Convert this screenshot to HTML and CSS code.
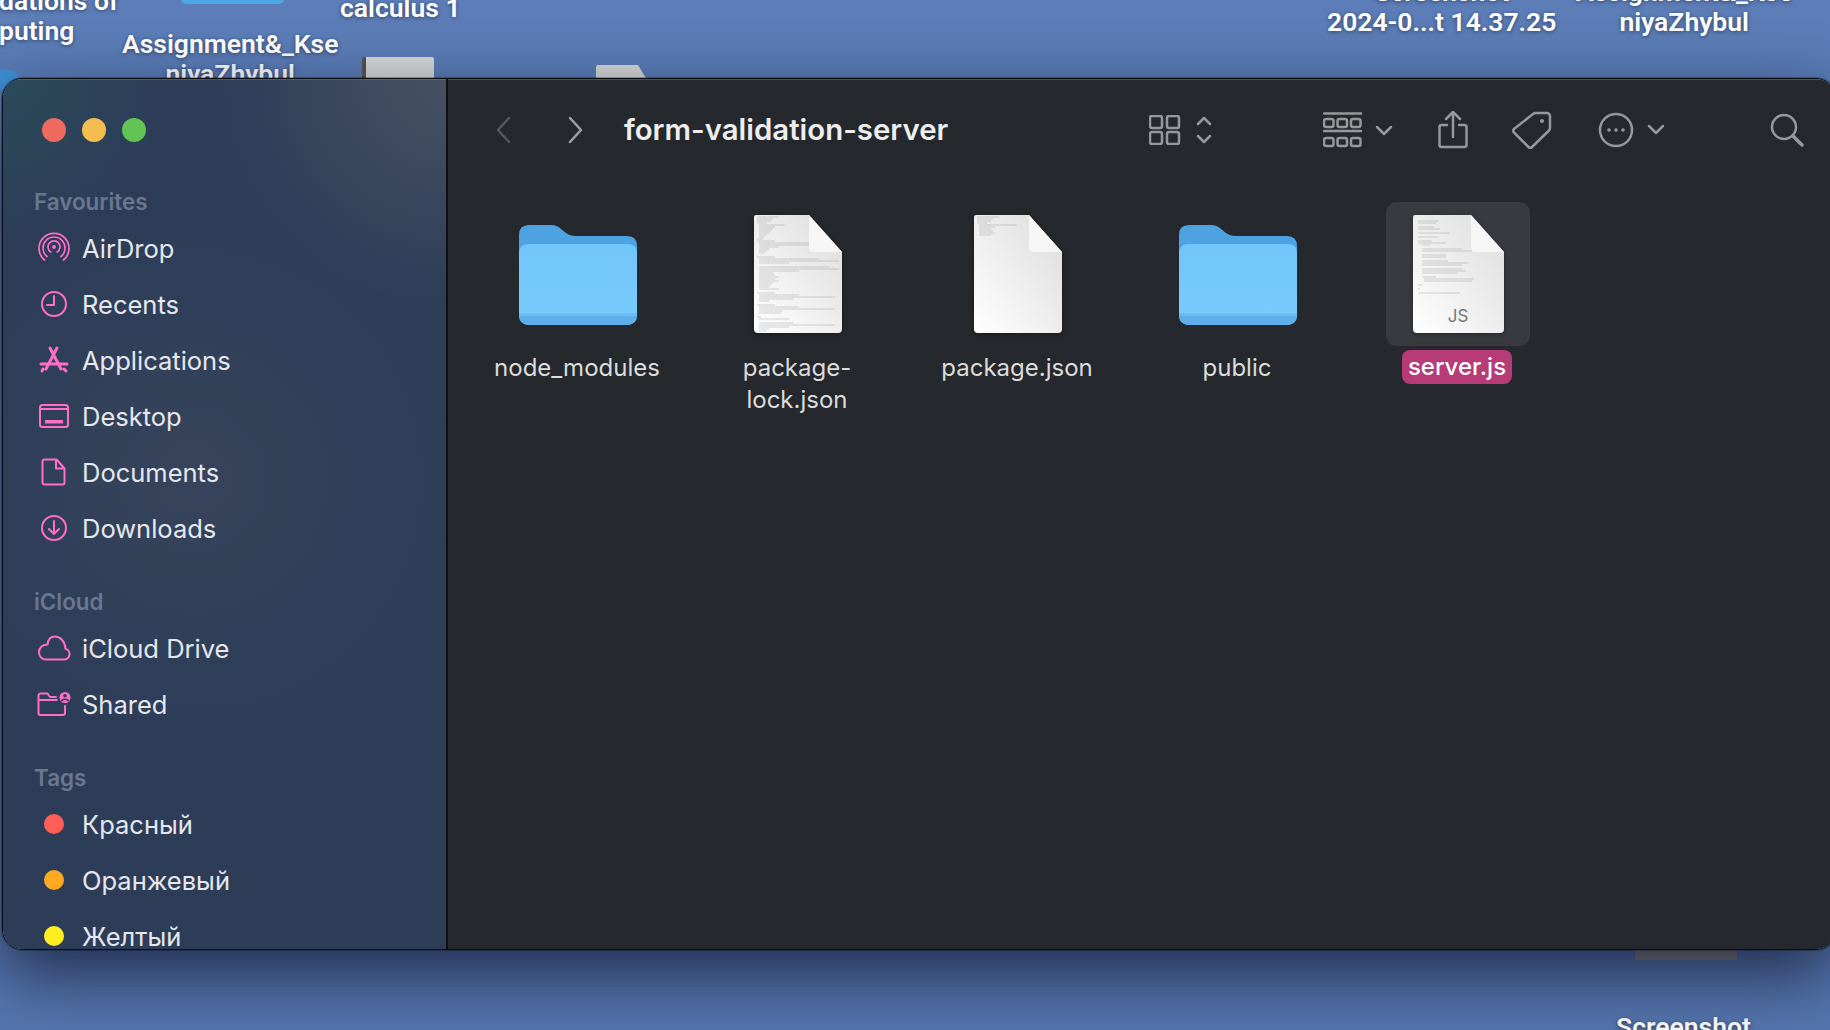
FILE: index.html
```html
<!DOCTYPE html>
<html lang="en">
<head>
    <meta charset="UTF-8">
    <meta name="viewport" content="width=device-width, initial-scale=1.0">
    <title>form-validation-server</title>
    <link rel="stylesheet" href="styles.css">
</head>
<body>
    <svg class="sprites" width="0" height="0">
        <defs>
            <linearGradient id="pageFill" x1="1" y1="0" x2="0" y2="1">
                <stop offset="0" stop-color="#dcdcdc"/>
                <stop offset="1" stop-color="#ffffff"/>
            </linearGradient>
            <linearGradient id="folderFront" x1="0" y1="0" x2="0" y2="1">
                <stop offset="0" stop-color="#72c5f9"/>
                <stop offset="1" stop-color="#79ccfd"/>
            </linearGradient>
            <symbol id="folder" viewBox="0 0 118 100">
                <path d="M0 10Q0 0 10 0H32Q38 0 42 4L47 8Q51 11 57 11H108Q118 11 118 21V88Q118 100 106 100H12Q0 100 0 88Z" fill="#4da2e2"/>
                <path d="M0 28Q0 19 10 19H108Q118 19 118 28V88Q118 100 106 100H12Q0 100 0 88Z" fill="url(#folderFront)"/>
                <path d="M0 88V91H118V88Z" fill="#6abcf2"/>
                <path d="M0 91Q0 100 12 100H106Q118 100 118 91Z" fill="#5eaeea"/>
            </symbol>
        </defs>
    </svg>

    <div class="desktop">
        <span class="desk-label label-foundations">dations of<br>puting</span>
        <div class="desk-folder"></div>
        <span class="desk-label label-calculus">calculus 1</span>
        <span class="desk-label label-assignment">Assignment&amp;_Kse<br>niyaZhybul</span>
        <div class="desk-doc doc-one"></div>
        <div class="desk-doc doc-two"></div>
        <div class="desk-blue"></div>
        <span class="desk-label label-shot">Screenshot<br>2024-0...t 14.37.25</span>
        <span class="desk-label label-assignment-two">Assignment&amp;_Kse<br>niyaZhybul</span>
        <div class="desk-thumb"></div>
        <span class="desk-label label-shot-two">Screenshot</span>

        <div class="window">
            <aside class="sidebar">
                <div class="traffic">
                    <span class="light light-red"></span>
                    <span class="light light-yellow"></span>
                    <span class="light light-green"></span>
                </div>

                <h3 class="side-head">Favourites</h3>
                <div class="side-row">
                    <svg class="side-icon thin" viewBox="0 0 32 32"><circle cx="16" cy="15" r="2" fill="#ff6ec7" stroke="none"/><path d="M12.800 20a6 6 0 1 1 6.400 0M9 24.500a11 11 0 1 1 14 0M6.500 28a15 15 0 1 1 19 0"/></svg>
                    <span>AirDrop</span>
                </div>
                <div class="side-row">
                    <svg class="side-icon" viewBox="0 0 32 32"><circle cx="16" cy="16" r="12"/><path d="M16 8v9H9"/></svg>
                    <span>Recents</span>
                </div>
                <div class="side-row">
                    <svg class="side-icon" viewBox="0 0 32 32"><path class="thick" d="M12 4l11 21M19 4L8 25M3 20h26M5 25l-1 2M26 25l2 2"/></svg>
                    <span>Applications</span>
                </div>
                <div class="side-row">
                    <svg class="side-icon" viewBox="0 0 32 32"><rect x="2" y="5" width="28" height="22" rx="2.500"/><path d="M2 9h28"/><rect x="7" y="20" width="18" height="3.500" fill="#ff6ec7" stroke="none"/></svg>
                    <span>Desktop</span>
                </div>
                <div class="side-row">
                    <svg class="side-icon" viewBox="0 0 32 32"><path d="M6.500 3.500h12l8 9v14a2 2 0 0 1-2 2h-18a2 2 0 0 1-2-2v-21a2 2 0 0 1 2-2zM18 3.500v9h8.500"/></svg>
                    <span>Documents</span>
                </div>
                <div class="side-row">
                    <svg class="side-icon" viewBox="0 0 32 32"><circle cx="16" cy="16" r="12"/><path d="M16 9v13M11 17l5 5 5-5"/></svg>
                    <span>Downloads</span>
                </div>

                <h3 class="side-head head-gap">iCloud</h3>
                <div class="side-row">
                    <svg class="side-icon wide" viewBox="0 0 34 26"><path d="M8 24.500H27a5.500 5.500 0 0 0 1.500-10.800C28 6 23 1.500 18 1.500 13.500 1.500 11 4.500 10.500 9.500 6 9.500 2 12.500 2 17c0 4.500 3 7.500 6 7.500z"/></svg>
                    <span>iCloud Drive</span>
                </div>
                <div class="side-row">
                    <svg class="side-icon wide" viewBox="0 0 34 26"><path d="M19 6H13L10.500 2.500H3.500a2 2 0 0 0-2 2V22a2 2 0 0 0 2 2H26a2 2 0 0 0 2-2V15M1.500 9H20"/><circle cx="28" cy="6.500" r="5.500" fill="#ff6ec7" stroke="none"/><circle cx="28" cy="4.800" r="1.800" fill="#2d3d58" stroke="none"/><path d="M24.800 9.500q3.200-2.400 6.400 0" stroke="#2d3d58" stroke-width="1.600"/></svg>
                    <span>Shared</span>
                </div>

                <h3 class="side-head head-gap">Tags</h3>
                <div class="side-row"><i class="tag tag-red"></i><span>Красный</span></div>
                <div class="side-row"><i class="tag tag-orange"></i><span>Оранжевый</span></div>
                <div class="side-row"><i class="tag tag-yellow"></i><span>Желтый</span></div>
            </aside>

            <main class="content">
                <header class="toolbar">
                    <svg class="nav-back" viewBox="0 0 16 28"><path d="M14 2L3 14l11 12"/></svg>
                    <svg class="nav-forward" viewBox="0 0 16 28"><path d="M2 2l11 12L2 26"/></svg>
                    <h1 class="title">form-validation-server</h1>
                    <svg class="tool tool-view" viewBox="0 0 64 30"><rect x="1" y="1" width="12" height="12" rx="2"/><rect x="18" y="1" width="12" height="12" rx="2"/><rect x="1" y="17" width="12" height="12" rx="2"/><rect x="18" y="17" width="12" height="12" rx="2"/><path d="M49 9l6-6 6 6M49 21l6 6 6-6"/></svg>
                    <svg class="tool tool-group" viewBox="0 0 70 36"><path d="M1 1.500h37M1 19h37"/><rect x="1" y="7" width="9.500" height="8" rx="2"/><rect x="14.500" y="7" width="9.500" height="8" rx="2"/><rect x="28" y="7" width="9.500" height="8" rx="2"/><rect x="1" y="26" width="9.500" height="8" rx="2"/><rect x="14.500" y="26" width="9.500" height="8" rx="2"/><rect x="28" y="26" width="9.500" height="8" rx="2"/><path d="M54 15l7 7 7-7"/></svg>
                    <svg class="tool tool-share" viewBox="0 0 30 38"><path d="M9 14H3.500a2 2 0 0 0-2 2v18a2 2 0 0 0 2 2h23a2 2 0 0 0 2-2V16a2 2 0 0 0-2-2H21M15 26V2M8 8l7-7 7 7"/></svg>
                    <svg class="tool tool-tag" viewBox="0 0 40 38"><path d="M24 2h11a3 3 0 0 1 3 3v12a4 4 0 0 1-1 2.500L20 36a2.500 2.500 0 0 1-3.500 0L2 21.500a2.500 2.500 0 0 1 0-3.500L21 3a4 4 0 0 1 3-1z"/><circle cx="30" cy="10" r="2" fill="#98989b" stroke="none"/></svg>
                    <svg class="tool tool-more" viewBox="0 0 66 36"><circle cx="18" cy="18" r="16"/><circle cx="11" cy="18" r="1.800" fill="#98989b" stroke="none"/><circle cx="18" cy="18" r="1.800" fill="#98989b" stroke="none"/><circle cx="25" cy="18" r="1.800" fill="#98989b" stroke="none"/><path d="M51 14l7 7 7-7"/></svg>
                    <svg class="tool tool-search" viewBox="0 0 34 34"><circle cx="14" cy="14" r="12"/><path d="M23 23l9 9" stroke-width="3.500"/></svg>
                </header>

                <section class="files">
                    <div class="file">
                        <div class="file-icon"><svg class="folder-svg"><use href="#folder"/></svg></div>
                        <p class="file-name">node_modules</p>
                    </div>
                    <div class="file">
                        <div class="file-icon">
                            <svg class="page-svg" viewBox="0 0 88 118">
                                <path d="M2 0H55L88 37V114Q88 118 84 118H4Q0 118 0 114V2Q0 0 2 0Z" fill="url(#pageFill)"/>
                                <path class="ink" d="M3 2h22M3 4h16M3 6h14M3 8h10M5 10h26M5 12h16M5 14h14M5 16h12M5 18h10M5 20h8M5 22h6M3 24h6M3 26h18M5 28h50M5 30h56M5 32h20M5 34h10M5 36h8M5 38h6M3 42h18M5 44h60M5 46h80M5 48h30M5 52h70M5 54h80M5 56h40M5 58h14M5 60h16M5 62h20M5 64h16M5 66h20M5 68h14M5 70h12M5 72h10M5 74h20M3 78h18M5 80h40M5 82h76M5 84h34M5 86h10M3 90h18M5 92h40M5 94h76M5 96h24M5 98h22M3 102h4M5 104h30M5 108h34M5 110h76M5 112h30M5 114h10M5 116h8"/>
                                <path d="M55 0L88 37H60Q55 37 55 32Z" fill="#f6f6f6"/>
                            </svg>
                        </div>
                        <p class="file-name">package-<br>lock.json</p>
                    </div>
                    <div class="file">
                        <div class="file-icon">
                            <svg class="page-svg" viewBox="0 0 88 118">
                                <path d="M2 0H55L88 37V114Q88 118 84 118H4Q0 118 0 114V2Q0 0 2 0Z" fill="url(#pageFill)"/>
                                <path class="ink" d="M3 2h22M3 4h16M3 6h14M3 8h10M5 10h38M5 12h16M5 14h12M5 16h14M5 18h16M5 20h12"/>
                                <path d="M55 0L88 37H60Q55 37 55 32Z" fill="#f6f6f6"/>
                            </svg>
                        </div>
                        <p class="file-name">package.json</p>
                    </div>
                    <div class="file">
                        <div class="file-icon"><svg class="folder-svg"><use href="#folder"/></svg></div>
                        <p class="file-name">public</p>
                    </div>
                    <div class="file selected">
                        <div class="file-icon">
                            <svg class="page-svg js-page" viewBox="0 0 91 118">
                                <path d="M2 0H58L91 37V114Q91 118 87 118H4Q0 118 0 114V2Q0 0 2 0Z" fill="url(#pageFill)"/>
                                <path class="ink" d="M5 6h20M5 8h18M5 12h16M5 14h22M5 18h32M5 22h20M5 26h14M5 28h28M9 30h8M9 34h40M9 36h50M9 40h24M9 42h24M9 46h26M9 48h46M9 50h40M9 54h40M9 56h44M9 58h36M9 62h14M11 64h50M11 66h48M5 70h4M5 74h2M5 78h42"/>
                                <path d="M58 0L91 37H62Q58 37 58 32Z" fill="#f6f6f6"/>
                            </svg>
                            <span class="js-mark">JS</span>
                        </div>
                        <p class="file-name">server.js</p>
                    </div>
                </section>
            </main>
        </div>
    </div>
</body>
</html>
```

FILE: styles.css
```css
* {
    box-sizing: border-box;
}
body {
    margin: 0;
    background: #5a7ab4;
    font-family: Inter, "Noto Sans", sans-serif;
    overflow: hidden;
}
.sprites {
    position: absolute;
}
.desktop {
    position: relative;
    width: 1830px;
    height: 1030px;
    overflow: hidden;
    background: linear-gradient(to bottom, #5c7db8, #5777b0);
}

/* things left on the desktop, behind the window */
.desk-label {
    position: absolute;
    color: #fff;
    font-family: Roboto, Inter, sans-serif;
    font-size: 26.5px;
    font-weight: 600;
    line-height: 30px;
    text-align: center;
    white-space: nowrap;
    text-shadow: 0 1px 4px rgba(0, 0, 0, .45);
}
.label-foundations {
    left: -1px;
    top: -14px;
    text-align: left;
}
.label-calculus {
    left: 340px;
    top: -7px;
}
.label-assignment {
    left: 122px;
    top: 29px;
}
.label-shot {
    left: 1327px;
    top: -23px;
}
.label-assignment-two {
    left: 1576px;
    top: -23px;
}
.label-shot-two {
    left: 1616px;
    top: 1012px;
}
.desk-folder {
    position: absolute;
    left: 181px;
    top: -10px;
    width: 103px;
    height: 14px;
    border-radius: 5px;
    background: #4da7e6;
}
.desk-doc {
    position: absolute;
    top: 57px;
    width: 72px;
    height: 30px;
    background: #d8d8d8;
    border-radius: 2px 2px 0 0;
}
.doc-one {
    left: 362px;
    border-left: 4px solid #555;
}
.doc-two {
    left: 596px;
    top: 65px;
    width: 60px;
    clip-path: polygon(0 0, 70% 0, 100% 100%, 0 100%);
}
.desk-blue {
    position: absolute;
    left: 0;
    top: 70px;
    width: 18px;
    height: 20px;
    border-radius: 0 8px 0 0;
    background: #3f92d6;
}
.desk-thumb {
    position: absolute;
    left: 1635px;
    top: 940px;
    width: 102px;
    height: 20px;
    background: #858585;
}

/* finder window */
.window {
    position: absolute;
    left: 2px;
    right: -6px;
    top: 78px;
    height: 872px;
    display: flex;
    overflow: hidden;
    border-radius: 20px;
    border: 1px solid #0c0d10;
    box-shadow: 0 25px 70px rgba(8, 14, 35, .72), 0 0 0 1px rgba(0, 0, 0, .25);
}
.sidebar {
    width: 445px;
    flex-shrink: 0;
    padding-left: 35px;
    border-right: 2px solid #0e0f12;
    background:
        radial-gradient(circle at 100% 0, rgba(120, 120, 120, .33), rgba(120, 120, 120, 0) 230px),
        radial-gradient(circle at 0 0, rgba(40, 90, 90, .45), rgba(40, 90, 90, 0) 160px),
        radial-gradient(circle at 190px 400px, rgba(90, 90, 100, .22), rgba(90, 90, 100, 0) 260px),
        #2d3d58;
    box-shadow: inset 0 1px 0 rgba(255, 255, 255, .14);
}
.traffic {
    display: flex;
    align-items: center;
    gap: 16px;
    height: 102px;
    padding: 0 0 0 4px;
}
.light {
    width: 24px;
    height: 24px;
    border-radius: 50%;
}
.light-red {
    background: #ee6a5f;
}
.light-yellow {
    background: #f5bd4f;
}
.light-green {
    background: #61c454;
}
.side-head {
    margin: 1px 0 0 -4px;
    height: 39px;
    line-height: 39px;
    font-size: 22.4px;
    font-weight: 600;
    color: #68788f;
}
.head-gap {
    margin-top: 26px;
}
.side-head + .side-row {
    margin-top: -1px;
}
.side-row {
    display: flex;
    align-items: center;
    gap: 12px;
    height: 56px;
    font-size: 25.5px;
    color: #e6e8ee;
}
.side-icon {
    width: 32px;
    height: 32px;
    flex-shrink: 0;
    fill: none;
    stroke: #ff6ec7;
    stroke-width: 2;
    stroke-linecap: round;
    stroke-linejoin: round;
}
.side-icon.thin {
    stroke-width: 1.700;
}
.side-icon .thick {
    stroke-width: 3;
}
.side-icon.wide {
    width: 34px;
    height: 26px;
    margin: 0 -1px 0 -1px;
}
.tag {
    width: 20px;
    height: 20px;
    margin: 0 6px;
    border-radius: 50%;
}
.tag-red {
    background: #ff5f57;
}
.tag-orange {
    background: #ffa922;
}
.tag-yellow {
    background: #ffee22;
}

/* right pane */
.content {
    flex: 1;
    min-width: 0;
    background: #25282c;
    box-shadow: inset 0 1px 0 rgba(255, 255, 255, .2);
}
.toolbar {
    display: flex;
    align-items: center;
    height: 101px;
    padding-left: 47px;
}
.toolbar svg {
    flex-shrink: 0;
    fill: none;
    stroke-linecap: round;
    stroke-linejoin: round;
}
.nav-back,
.nav-forward {
    width: 16px;
    height: 28px;
    stroke-width: 2.500;
}
.nav-back {
    stroke: #55575b;
}
.nav-forward {
    margin-left: 57px;
    stroke: #a0a0a3;
}
.title {
    margin: 0 0 0 40px;
    width: 525px;
    font-size: 29.4px;
    font-weight: 600;
    color: #eeeeee;
    white-space: nowrap;
}
.tool {
    stroke: #98989b;
    stroke-width: 2.500;
}
.tool-view {
    width: 64px;
    height: 30px;
}
.tool-group {
    margin-left: 110px;
    width: 70px;
    height: 36px;
}
.tool-share {
    margin-left: 45px;
    width: 30px;
    height: 38px;
}
.tool-tag {
    margin-left: 44px;
    width: 40px;
    height: 38px;
}
.tool-more {
    margin-left: 46px;
    width: 66px;
    height: 36px;
}
.tool-search {
    margin-left: 106px;
    width: 34px;
    height: 34px;
}
.files {
    display: flex;
    padding: 22px 0 0 20px;
}
.file {
    width: 220px;
    display: flex;
    flex-direction: column;
    align-items: center;
}
.file-icon {
    position: relative;
    display: flex;
    align-items: center;
    justify-content: center;
    width: 144px;
    height: 144px;
    border-radius: 10px;
}
.folder-svg {
    width: 118px;
    height: 100px;
    margin-top: 2px;
}
.page-svg {
    width: 88px;
    height: 118px;
    margin-top: -1px;
    filter: drop-shadow(0 1px 2px rgba(0, 0, 0, .4));
}
.page-svg .ink {
    fill: none;
    stroke: #888;
    stroke-width: .35;
}
.js-page {
    width: 91px;
}
.js-mark {
    position: absolute;
    left: 0;
    right: 0;
    bottom: 20px;
    text-align: center;
    font-size: 17px;
    color: #777;
}
.file-name {
    margin: 5px 2px 0 0;
    padding: 1px 7px;
    font-size: 24px;
    line-height: 32px;
    color: #dcdcdc;
    text-align: center;
    white-space: nowrap;
}
.selected .file-icon {
    background: #383a40;
}
.selected .file-name {
    margin-top: 4px;
    padding: 1px 6px;
    border-radius: 8px;
    background: #b73b76;
    color: #fff;
    font-weight: 500;
}
```
